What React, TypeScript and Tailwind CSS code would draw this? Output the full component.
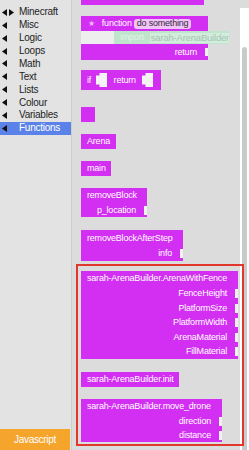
import type { ReactNode } from "react";

const MAG = "bg-[#d22ff3]";

const categories = [
  "Minecraft",
  "Misc",
  "Logic",
  "Loops",
  "Math",
  "Text",
  "Lists",
  "Colour",
  "Variables",
  "Functions",
];

function Tri({ dir = "left" }: { dir?: "left" | "right" }) {
  return (
    <svg width="5" height="7" viewBox="0 0 5 7" className="shrink-0">
      <polygon points={dir === "left" ? "5,0 5,7 0,3.5" : "0,0 0,7 5,3.5"} fill="#111" />
    </svg>
  );
}

function Socket() {
  return <div className="w-[3.5px] h-[9px] bg-[#f1f1f1] shrink-0" />;
}

function Slot() {
  return (
    <svg width="11" height="14" viewBox="0 0 11 14" className="shrink-0">
      <path d="M0 2.5 H3.5 V0 H11 V14 H3.5 V11.5 H0 Z" fill="#f4f4f4" />
    </svg>
  );
}

// a row with a value input: label pushed right, socket on the block edge
function InputRow({ label, h }: { label: string; h: string }) {
  return (
    <div className={`flex items-center justify-end ${h}`}>
      <span className="mr-[7.5px]">{label}</span>
      <Socket />
    </div>
  );
}

function Block({ w, children, className = "" }: { w: string; children: ReactNode; className?: string }) {
  return <div className={`${MAG} ${w} text-white flex flex-col shrink-0 ${className}`}>{children}</div>;
}

export default function App() {
  return (
    <div className="w-[249px] h-[450px] flex overflow-hidden font-['Liberation_Sans',Arial,sans-serif]">
      <aside className="w-[72px] shrink-0 bg-[#e3e3e3] border-r border-[#cdcdcd] flex flex-col justify-between">
        <ul className="pt-[5.9px] text-[10px] tracking-[-0.25px] text-[#1e1e1e]">
          {categories.map((c, i) => {
            const on = c === "Functions";
            return (
              <li
                key={c}
                className={`h-[12.9px] flex items-center pl-[2px] ${on ? "bg-[#5b82e8] text-white" : ""}`}
              >
                <span className="w-[17px] flex items-center gap-[2px]">
                  <Tri />
                  {i === 0 && <Tri dir="right" />}
                </span>
                <span className="leading-none">{c}</span>
              </li>
            );
          })}
        </ul>
        <div className="w-[70px] h-[21px] bg-[#f6a52c] text-white text-[10px] tracking-[-0.3px] flex items-center justify-center">
          Javascript
        </div>
      </aside>

      <main className="relative flex-1 bg-[#dcdcdc] pl-[9px] flex flex-col items-start text-[9px] tracking-[-0.2px] leading-none whitespace-nowrap">
        {/* clipped block at the top */}
        <div className={`${MAG} w-[123px] h-[5px] shrink-0`} />

        {/* function definition */}
        <Block w="w-[127px]" className="mt-[11px] h-[44px]">
          <div className="h-[15px] flex items-center pl-[7px]">
            <span className="text-[#f3b6fa] text-[8px]">★</span>
            <span className="ml-[7px]">function</span>
            <span className="ml-[2.5px] bg-[#efc6f6] text-[#3b2a3d] rounded-[3px] px-[2.5px] h-[10px] flex items-center">
              do something
            </span>
          </div>
          <div className="h-[13px] flex">
            <div className="w-[11px]" />
            <div className="flex-1 bg-[#eeeeee] flex pl-[33px]">
              <div className="w-[115px] shrink-0 bg-[#bfe5cd] flex items-center pl-[6px] gap-[6px] overflow-hidden">
                <span className="text-[#e2f4e9]">import</span>
                <span className="flex-1 h-[10px] bg-[#d3eddc] text-[#a3c4b3] text-[9.5px] flex items-center pl-[1px] overflow-hidden">
                  sarah-ArenaBuilder
                </span>
              </div>
            </div>
          </div>
          <div className="h-[16px] flex items-center justify-end">
            <span className="mr-[7.5px]">return</span>
            <div className="w-[3.5px] h-[8px] bg-[#f1f1f1]" />
          </div>
        </Block>

        {/* if / return */}
        <div className={`${MAG} mt-[10px] w-[80px] h-[20px] text-white flex items-center pl-[6px] shrink-0`}>
          <span>if</span>
          <span className="ml-[5px]">
            <Slot />
          </span>
          <span className="ml-[6.5px]">return</span>
          <span className="ml-[6.5px]">
            <Slot />
          </span>
        </div>

        <div className={`${MAG} mt-[17px] w-[14px] h-[15px] shrink-0`} />

        <Block w="w-[35px]" className="mt-[12px] h-[15px] justify-center pl-[6px]">
          Arena
        </Block>
        <Block w="w-[30px]" className="mt-[12px] h-[15px] justify-center pl-[6px]">
          main
        </Block>

        <Block w="w-[66px]" className="mt-[12px]">
          <div className="h-[15px] flex items-center pl-[6px]">removeBlock</div>
          <InputRow label="p_location" h="h-[14px]" />
        </Block>

        <Block w="w-[102px]" className="mt-[13px]">
          <div className="h-[16px] flex items-center pl-[6px]">removeBlockAfterStep</div>
          <InputRow label="info" h="h-[15px]" />
        </Block>

        {/* highlighted library blocks */}
        <div className="relative z-10 mt-[3px] -ml-[5.5px] w-[168.5px] h-[182px] border-2 border-[#e2372d] pl-[3.5px] pt-[5px] flex flex-col items-start shrink-0">
          <Block w="w-[157px]">
            <div className="h-[15.5px] flex items-center pl-[6px]">sarah-ArenaBuilder.ArenaWithFence</div>
            <InputRow label="FenceHeight" h="h-[14.5px]" />
            <InputRow label="PlatformSize" h="h-[14.5px]" />
            <InputRow label="PlatformWidth" h="h-[14.5px]" />
            <InputRow label="ArenaMaterial" h="h-[14.5px]" />
            <InputRow label="FillMaterial" h="h-[14.5px]" />
          </Block>
          <Block w="w-[98px]" className="mt-[13px] h-[15px] justify-center pl-[6px]">
            sarah-ArenaBuilder.init
          </Block>
          <Block w="w-[141px]" className="mt-[12px]">
            <div className="h-[15px] flex items-center pl-[6px]">sarah-ArenaBuilder.move_drone</div>
            <InputRow label="direction" h="h-[14px]" />
            <InputRow label="distance" h="h-[14px]" />
          </Block>
        </div>

        {/* scrollbar */}
        <div className="absolute right-0 top-[8px] bottom-0 w-[9px] bg-white">
          <div className="absolute left-[2px] top-[39px] bottom-0 w-[5px] rounded-t-[3px] bg-[#cacaca]" />
        </div>
      </main>
    </div>
  );
}
